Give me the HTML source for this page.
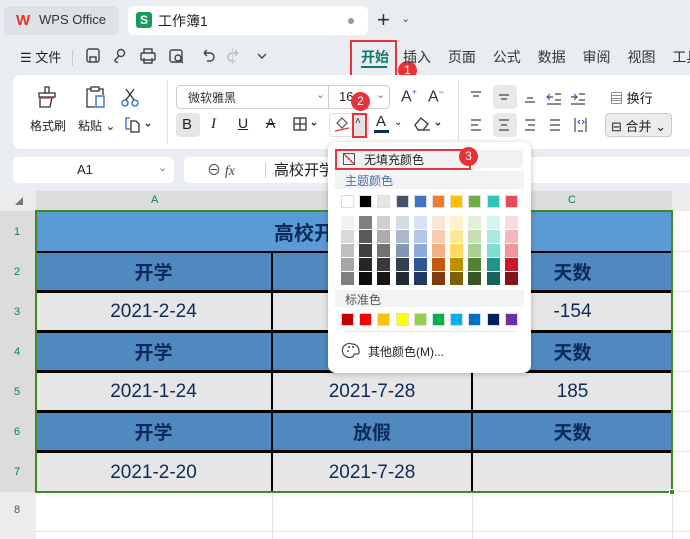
<!DOCTYPE html>
<html><head><meta charset="utf-8"><style>
*{margin:0;padding:0;box-sizing:border-box}
body{width:690px;height:539px;overflow:hidden;background:#e9ecf1;font-family:"Liberation Sans","Noto Sans CJK SC",sans-serif;position:relative;color:#222;font-size:13px}
.a{position:absolute}
.tab{border-radius:6px}
.t{white-space:nowrap}
.sw{display:grid;grid-template-columns:repeat(10,13px);column-gap:5.2px}
.sw div{height:13px;border:1px solid #ddd}
.sh{display:grid;grid-template-columns:repeat(10,13px);column-gap:5.2px;row-gap:1px}
.sh div{height:13px}
.cell{position:absolute;display:flex;align-items:center;justify-content:center;color:#0e2a5c;font-size:19px}
.hb{font-weight:bold}
svg{position:absolute;overflow:visible}
</style></head><body>
<!-- title bar -->
<div class="a tab" style="left:4px;top:6px;width:115px;height:29px;background:#dde1e8"></div>
<div class="a t" style="left:16px;top:12px;color:#e5332a;font-weight:bold;font-size:15px">W</div>
<div class="a t" style="left:39px;top:12px;font-size:13px;color:#333">WPS Office</div>
<div class="a tab" style="left:128px;top:6px;width:240px;height:29px;background:#fff"></div>
<div class="a" style="left:136px;top:12px;width:16px;height:16px;background:#1a9a58;border-radius:3px;color:#fff;font-size:12px;font-weight:bold;text-align:center;line-height:16px">S</div>
<div class="a t" style="left:158px;top:11px;font-size:14px">工作簿1</div>
<div class="a" style="left:348px;top:18px;width:6px;height:6px;border-radius:3px;background:#999"></div>
<div class="a t" style="left:377px;top:7px;font-size:22px;color:#333">+</div>
<div class="a t" style="left:401px;top:12px;font-size:11px;color:#555">⌄</div>
<!-- menu row -->
<div class="a t" style="left:20px;top:47px;font-size:13px">☰ 文件</div>
<div class="a" style="left:72px;top:50px;width:1px;height:16px;background:#ccc"></div>
<svg style="left:86px;top:48px" width="180" height="16" fill="none" stroke="#444" stroke-width="1.4">
<rect x="1" y="1" width="12" height="13" rx="2"/><path d="M4 14v-5h6v5"/>
<circle cx="35" cy="5" r="3.5"/><path d="M33 8l-4 4a2 2 0 0 0 3 2"/>
<rect x="55" y="5" width="14" height="7" rx="1"/><path d="M58 5V1h8v4M58 10v5h8v-5"/>
<rect x="84" y="2" width="12" height="12" rx="2"/><circle cx="92" cy="10" r="3"/><path d="M94 12l3 3"/>
<path d="M118 5h6a4 4 0 0 1 0 8h-3M118 5l3-3M118 5l3 3"/>
<path stroke="#bbb" d="M152 5h-6a4 4 0 0 0 0 8h3M152 5l-3-3M152 5l-3 3"/>
<path d="M172 6l4 4 4-4"/>
</svg>
<div class="a" style="left:232px;top:48px;width:1px;height:16px;background:#ccc"></div>
<div class="a t" style="left:361px;top:47px;font-size:14px;color:#0b7a6b;font-weight:bold">开始</div>
<div class="a" style="left:361px;top:66px;width:26px;height:2px;background:#0b7a6b"></div>
<div class="a" style="left:350px;top:40px;width:47px;height:38px;border:2px solid #e8323a"></div>
<div class="a" style="left:398px;top:61px;width:19px;height:19px;border-radius:10px;background:#e8323a;color:#fff;font-size:12px;text-align:center;line-height:19px">1</div>
<div class="a t" style="left:403px;top:47px;font-size:14px;color:#333;word-spacing:13px">插入 页面 公式 数据 审阅 视图 工具</div>
<!-- ribbon -->
<div class="a" style="left:13px;top:75px;width:690px;height:74px;background:#fff;border-radius:7px"></div>
<svg style="left:36px;top:86px" width="22" height="22" fill="none" stroke="#333" stroke-width="1.3">
<path d="M9 1h4v6H9z"/><path d="M3 7h16v4H3z"/><path d="M4 11v10h10l2-10"/><path stroke="#c44" d="M4 12h14"/></svg>
<svg style="left:84px;top:86px" width="22" height="22" fill="none" stroke="#333" stroke-width="1.3">
<path d="M7 3H3v18h8"/><path d="M15 3h4v6"/><rect x="7" y="1" width="8" height="4"/><rect x="12" y="10" width="8" height="11" stroke="#2a64d4"/></svg>
<svg style="left:121px;top:88px" width="18" height="20" fill="none" stroke="#2a64d4" stroke-width="1.3">
<circle cx="4" cy="15" r="3"/><circle cx="14" cy="15" r="3"/><path stroke="#333" d="M5 12L13 1M13 12L5 1"/></svg>
<div class="a t" style="left:30px;top:117px;font-size:12px">格式刷</div>
<div class="a t" style="left:78px;top:117px;font-size:12px">粘贴 ⌄</div>
<svg style="left:125px;top:117px" width="28" height="16" fill="none" stroke-width="1.3">
<path stroke="#2a64d4" d="M5 1H1v11h4"/><path stroke="#333" d="M6 4h5l3 3v8H6z"/><path stroke="#333" d="M21 7l2 2 2-2"/></svg>
<div class="a" style="left:167px;top:80px;width:1px;height:64px;background:#e3e3e3"></div>
<div class="a" style="left:176px;top:85px;width:214px;height:24px;border:1px solid #ccc;border-radius:4px"></div>
<div class="a" style="left:328px;top:85px;width:1px;height:24px;background:#ccc"></div>
<div class="a t" style="left:188px;top:89px;font-size:12px;color:#333">微软雅黑</div>
<div class="a t" style="left:316px;top:88px;font-size:11px;color:#777">⌄</div>
<div class="a t" style="left:339px;top:89px;font-size:13px">16</div>
<div class="a t" style="left:376px;top:88px;font-size:11px;color:#777">⌄</div>
<div class="a t" style="left:401px;top:87px;font-size:16px;color:#333">A<sup style="font-size:9px;color:#2a64d4">+</sup></div>
<div class="a t" style="left:428px;top:87px;font-size:16px;color:#333">A<sup style="font-size:9px;color:#2a64d4">−</sup></div>
<div class="a" style="left:176px;top:113px;width:24px;height:24px;background:#e5e5e5;border-radius:4px"></div>
<div class="a t" style="left:182px;top:116px;font-size:15px">B</div>
<div class="a t" style="left:211px;top:116px;font-size:15px;font-style:italic;font-family:'Liberation Serif',serif">I</div>
<div class="a t" style="left:238px;top:115px;font-size:14px;text-decoration:underline">U</div>
<div class="a t" style="left:266px;top:115px;font-size:14px;text-decoration:line-through">A</div>
<svg style="left:293px;top:117px" width="28" height="14" fill="none" stroke="#333" stroke-width="1.3">
<rect x="1" y="1" width="12" height="12"/><path d="M7 1v12M1 7h12M19 6l2 2 2-2"/></svg>
<div class="a" style="left:329px;top:113px;width:40px;height:24px;border:1px solid #ddd;border-radius:4px"></div>
<svg style="left:334px;top:116px" width="16" height="16" fill="none" stroke="#555" stroke-width="1.2">
<path d="M3 7l5-5 5 5-5 5z"/><path stroke="#e8323a" d="M1 15l14-3"/></svg>
<div class="a" style="left:352px;top:113px;width:15px;height:25px;background:#e3e3e3;border:2px solid #e8323a"></div>
<div class="a t" style="left:355px;top:116px;font-size:10px">˄</div>
<div class="a" style="left:351px;top:92px;width:19px;height:19px;border-radius:10px;background:#e8323a;color:#fff;font-size:12px;text-align:center;line-height:19px">2</div>
<div class="a t" style="left:376px;top:113px;font-size:15px">A</div>
<div class="a" style="left:374px;top:130px;width:15px;height:3px;background:#0e2a5c"></div>
<div class="a t" style="left:394px;top:117px;font-size:10px">⌄</div>
<svg style="left:414px;top:117px" width="32" height="14" fill="none" stroke="#333" stroke-width="1.3">
<path d="M1 8l6-7 7 6-5 6H4z"/><path d="M4 13h12M22 6l2 2 2-2"/></svg>
<div class="a" style="left:458px;top:80px;width:1px;height:64px;background:#e3e3e3"></div>
<div class="a" style="left:493px;top:85px;width:24px;height:24px;background:#e8e8e8;border-radius:4px"></div>
<div class="a" style="left:493px;top:113px;width:24px;height:24px;background:#e8e8e8;border-radius:4px"></div>
<svg style="left:470px;top:90px" width="140" height="44" fill="none" stroke="#444" stroke-width="1.2">
<path d="M1 2h10M3 6h6"/><path d="M29 5h10M31 9h6"/><path d="M55 12h10M57 8h6"/>
<path stroke="#2a64d4" d="M80 4l-3 3 3 3"/><path d="M77 7h6M85 4h6M85 10h6M77 14h14"/>
<path stroke="#2a64d4" d="M104 4l3 3-3 3"/><path d="M101 7h6M109 4h6M109 10h6M101 14h14"/>
<path d="M1 30h10M1 35h7M1 40h10"/><path d="M29 30h10M31 35h6M29 40h10"/><path d="M55 30h10M58 35h7M55 40h10"/><path d="M80 30h10M80 35h10M80 40h10"/><path d="M105 28v14M116 28v14M108 41h5"/><path stroke="#2a64d4" d="M110 30l-2 2 2 2M112 30l2 2-2 2"/>
</svg>
<div class="a t" style="left:610px;top:88px;font-size:13px">▤ 换行</div>
<div class="a" style="left:605px;top:113px;width:67px;height:24px;border:1px solid #ccc;background:#ececec;border-radius:4px"></div>
<div class="a t" style="left:611px;top:116px;font-size:13px">⊟ 合并 ⌄</div>
<!-- formula bar -->
<div class="a" style="left:13px;top:157px;width:161px;height:26px;background:#fff;border-radius:5px"></div>
<div class="a t" style="left:77px;top:162px;font-size:13px">A1</div>
<div class="a t" style="left:158px;top:161px;font-size:11px;color:#777">⌄</div>
<div class="a" style="left:184px;top:157px;width:520px;height:26px;background:#fff;border-radius:5px"></div>
<div class="a t" style="left:207px;top:160px;font-size:14px;color:#444">⊖ <i style="font-family:'Liberation Serif',serif">fx</i></div>
<div class="a" style="left:265px;top:162px;width:1px;height:16px;background:#ccc"></div>
<div class="a t" style="left:274px;top:159px;font-size:15px">高校开学</div>
<!-- grid -->
<div class="a" style="left:0;top:191px;width:690px;height:348px;background:#fff"></div>
<div class="a" style="left:0;top:191px;width:690px;height:20px;background:#ececec"></div>
<div class="a" style="left:36px;top:191px;width:636px;height:20px;background:#dcdcdc"></div>
<div class="a" style="left:0;top:211px;width:36px;height:281px;background:#dcdcdc"></div>
<div class="a" style="left:0;top:492px;width:36px;height:47px;background:#ececec"></div>
<div class="a t" style="left:15px;top:196px;font-size:8px;color:#777">◢</div>
<div class="a t" style="left:151px;top:194px;font-size:11px;color:#0b7a6b">A</div>
<div class="a t" style="left:568px;top:194px;font-size:11px;color:#0b7a6b">C</div>
<div class="a t" style="left:14px;top:212px;font-size:11px;color:#0b7a6b;line-height:40px">1<br>2<br>3<br>4<br>5<br>6<br>7</div>
<div class="a t" style="left:14px;top:504px;font-size:11px;color:#555">8</div>
<div class="a" style="left:36px;top:531px;width:654px;height:1px;background:#e3e3e3"></div>
<div class="a" style="left:272px;top:492px;width:1px;height:47px;background:#e3e3e3"></div>
<div class="a" style="left:472px;top:492px;width:1px;height:47px;background:#e3e3e3"></div>
<div class="a" style="left:672px;top:211px;width:1px;height:328px;background:#e3e3e3"></div>
<div class="a" style="left:672px;top:251px;width:18px;height:1px;background:#e3e3e3"></div>
<div class="a" style="left:672px;top:291px;width:18px;height:1px;background:#e3e3e3"></div>
<div class="a" style="left:672px;top:331px;width:18px;height:1px;background:#e3e3e3"></div>
<div class="a" style="left:672px;top:371px;width:18px;height:1px;background:#e3e3e3"></div>
<div class="a" style="left:672px;top:411px;width:18px;height:1px;background:#e3e3e3"></div>
<div class="a" style="left:672px;top:451px;width:18px;height:1px;background:#e3e3e3"></div>
<div class="a" style="left:672px;top:491px;width:18px;height:1px;background:#e3e3e3"></div>
<!-- table -->
<div class="cell hb" style="left:36px;top:211px;width:636px;height:41px;background:#5b9bd5;font-size:20px">高校开学放假天数</div>
<div class="a" style="left:36px;top:251px;width:636px;height:241px;background:#000"></div>
<div class="cell hb" style="left:36px;top:253px;width:235px;height:37px;background:#4f89c0">开学</div>
<div class="cell hb" style="left:273px;top:253px;width:198px;height:37px;background:#4f89c0">放假</div>
<div class="cell hb" style="left:473px;top:253px;width:199px;height:37px;background:#4f89c0">天数</div>
<div class="cell" style="left:36px;top:293px;width:235px;height:37px;background:#e6e6e6">2021-2-24</div>
<div class="cell" style="left:273px;top:293px;width:198px;height:37px;background:#e6e6e6">2021-7-28</div>
<div class="cell" style="left:473px;top:293px;width:199px;height:37px;background:#e6e6e6">-154</div>
<div class="cell hb" style="left:36px;top:333px;width:235px;height:37px;background:#4f89c0">开学</div>
<div class="cell hb" style="left:273px;top:333px;width:198px;height:37px;background:#4f89c0">放假</div>
<div class="cell hb" style="left:473px;top:333px;width:199px;height:37px;background:#4f89c0">天数</div>
<div class="cell" style="left:36px;top:373px;width:235px;height:37px;background:#e6e6e6">2021-1-24</div>
<div class="cell" style="left:273px;top:373px;width:198px;height:37px;background:#e6e6e6">2021-7-28</div>
<div class="cell" style="left:473px;top:373px;width:199px;height:37px;background:#e6e6e6">185</div>
<div class="cell hb" style="left:36px;top:413px;width:235px;height:37px;background:#4f89c0">开学</div>
<div class="cell hb" style="left:273px;top:413px;width:198px;height:37px;background:#4f89c0">放假</div>
<div class="cell hb" style="left:473px;top:413px;width:199px;height:37px;background:#4f89c0">天数</div>
<div class="cell" style="left:36px;top:453px;width:235px;height:39px;background:#e6e6e6">2021-2-20</div>
<div class="cell" style="left:273px;top:453px;width:198px;height:39px;background:#e6e6e6">2021-7-28</div>
<div class="cell" style="left:473px;top:453px;width:199px;height:39px;background:#e6e6e6"></div>
<div class="a" style="left:35px;top:210px;width:638px;height:283px;border:2px solid #3e8a1f"></div>
<div class="a" style="left:669px;top:489px;width:6px;height:6px;background:#3e8a1f;border:1px solid #fff"></div>
<!-- popup -->
<div class="a" style="left:328px;top:142px;width:203px;height:231px;background:#fff;border-radius:8px;box-shadow:0 1px 6px rgba(0,0,0,.25)"></div>
<div class="a" style="left:335px;top:150px;width:188px;height:18px;background:#f0f1f3;border-radius:4px"></div>
<div class="a" style="left:335px;top:149px;width:136px;height:21px;border:2px solid #e8323a"></div>
<div class="a" style="left:343px;top:153px;width:12px;height:12px;border:1px solid #555;background:linear-gradient(to top right,transparent 45%,#e8323a 45%,#e8323a 55%,transparent 55%)"></div>
<div class="a t" style="left:364px;top:151px;font-size:12px">无填充颜色</div>
<div class="a" style="left:459px;top:147px;width:19px;height:19px;border-radius:10px;background:#e8323a;color:#fff;font-size:12px;text-align:center;line-height:19px">3</div>
<div class="a" style="left:335px;top:171px;width:189px;height:18px;background:#f2f3f5"></div>
<div class="a t" style="left:345px;top:172px;font-size:12px;color:#4a6fa5">主题颜色</div>
<div class="a sw" style="left:341px;top:195px">
<div style="background:#fff"></div><div style="background:#000"></div><div style="background:#e7e6e6"></div><div style="background:#44546a"></div><div style="background:#4472c4"></div><div style="background:#ed7d31"></div><div style="background:#ffc000"></div><div style="background:#70ad47"></div><div style="background:#2ec4b6"></div><div style="background:#e84c5b"></div></div>
<div class="a sh" style="left:341px;top:216px">
<div style="background:#f2f2f2"></div><div style="background:#7f7f7f"></div><div style="background:#d0cece"></div><div style="background:#d6dce4"></div><div style="background:#d9e1f2"></div><div style="background:#fce4d6"></div><div style="background:#fff2cc"></div><div style="background:#e2efda"></div><div style="background:#d5f3f0"></div><div style="background:#fadbde"></div>
<div style="background:#d9d9d9"></div><div style="background:#595959"></div><div style="background:#aeabab"></div><div style="background:#adb9ca"></div><div style="background:#b4c6e7"></div><div style="background:#f8cbad"></div><div style="background:#ffe699"></div><div style="background:#c6e0b4"></div><div style="background:#aae8e2"></div><div style="background:#f5b7bd"></div>
<div style="background:#bfbfbf"></div><div style="background:#404040"></div><div style="background:#757171"></div><div style="background:#8497b0"></div><div style="background:#8ea9db"></div><div style="background:#f4b084"></div><div style="background:#ffd966"></div><div style="background:#a9d08e"></div><div style="background:#80ddd4"></div><div style="background:#f1949d"></div>
<div style="background:#a6a6a6"></div><div style="background:#262626"></div><div style="background:#3a3838"></div><div style="background:#323f4f"></div><div style="background:#2f5597"></div><div style="background:#c65911"></div><div style="background:#bf8f00"></div><div style="background:#548235"></div><div style="background:#22938a"></div><div style="background:#c8192b"></div>
<div style="background:#808080"></div><div style="background:#0d0d0d"></div><div style="background:#171616"></div><div style="background:#222a35"></div><div style="background:#1f3864"></div><div style="background:#843c0c"></div><div style="background:#806000"></div><div style="background:#375623"></div><div style="background:#17625b"></div><div style="background:#85111d"></div></div>
<div class="a" style="left:335px;top:290px;width:189px;height:17px;background:#f2f3f5"></div>
<div class="a t" style="left:345px;top:291px;font-size:12px;color:#555">标准色</div>
<div class="a sw" style="left:341px;top:313px">
<div style="background:#c00000"></div><div style="background:#ff0000"></div><div style="background:#ffc000"></div><div style="background:#ffff00"></div><div style="background:#92d050"></div><div style="background:#00b050"></div><div style="background:#00b0f0"></div><div style="background:#0070c0"></div><div style="background:#002060"></div><div style="background:#7030a0"></div></div>
<div class="a" style="left:345px;top:331px;width:172px;height:1px;background:#e3e3e3"></div>
<svg style="left:344px;top:343px" width="16" height="15" fill="none" stroke="#444" stroke-width="1.2">
<path d="M8 1a7 7 0 1 0 0 13c2 0 1-3 3-3h2a2 2 0 0 0 2-3A7 7 0 0 0 8 1z"/><circle cx="4" cy="8" r="1" fill="#2a64d4" stroke="none"/><circle cx="5" cy="4" r="1" fill="#444" stroke="none"/><circle cx="9" cy="4" r="1" fill="#444" stroke="none"/></svg>
<div class="a t" style="left:368px;top:343px;font-size:12px">其他颜色(M)...</div>
</body></html>
